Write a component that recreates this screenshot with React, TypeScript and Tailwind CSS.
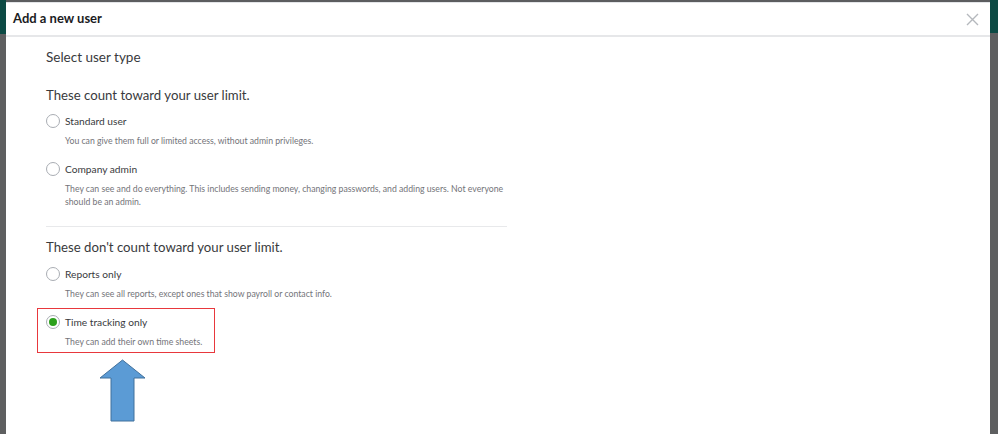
import React from "react";

type Option = { label: string; desc: string[]; checked?: boolean };

function Radio({ checked }: { checked?: boolean }) {
  return (
    <span className="flex h-[14px] w-[14px] shrink-0 items-center justify-center rounded-full border border-[#a9adb3] bg-white">
      {checked && <span className="h-[8px] w-[8px] rounded-full bg-[#2ca01c]" />}
    </span>
  );
}

function Choice({ opt }: { opt: Option }) {
  return (
    <div className="flex flex-col">
      <div className="flex h-[14px] items-center gap-[5px]">
        <Radio checked={opt.checked} />
        <span className="text-[10.2px] leading-[14px] text-[#393a3d]">{opt.label}</span>
      </div>
      <div className="mt-[6px] whitespace-nowrap pl-[19px] text-[8.7px] leading-[13px] text-[#737479]">
        {opt.desc.map((d) => (
          <div key={d}>{d}</div>
        ))}
      </div>
    </div>
  );
}

export default function App() {
  return (
    <div className="flex h-[434px] w-[998px] overflow-hidden bg-[#5c5d5f] font-['Lato',sans-serif]">
      <div className="flex w-[6px] flex-col">
        <div className="h-[34px] bg-[#0c4a44]" />
        <div className="flex-1 bg-[#5e5f60]" />
      </div>
      <div className="flex flex-1 flex-col pt-[2px]">
        <div className="h-[1px] bg-[#e3e5e8]" />
        <div className="flex flex-1 flex-col bg-white">
          <div className="flex h-[34px] items-center justify-between border-b-2 border-[#e6e7e9] pl-[7px] pr-[10px]">
            <span className="text-[13px] font-bold text-[#1b1c1e]">Add a new user</span>
            <svg width="13" height="13" viewBox="0 0 13 13" className="mr-[1px]">
              <path d="M1 1L12 12M12 1L1 12" stroke="#b5b8bd" strokeWidth="1.4" />
            </svg>
          </div>
          <div className="flex flex-col pl-[40px]">
            <div className="mt-[10px] text-[13.5px] leading-[20px] text-[#393a3d]">Select user type</div>
            <div className="mt-[19px] text-[13.2px] leading-[18px] text-[#393a3d]">These count toward your user limit.</div>
            <div className="w-[461px]">
              <div className="mt-[10px] flex flex-col gap-[15px]">
                <Choice opt={{ label: "Standard user", desc: ["You can give them full or limited access, without admin privileges."] }} />
                <Choice
                  opt={{
                    label: "Company admin",
                    desc: [
                      "They can see and do everything. This includes sending money, changing passwords, and adding users. Not everyone",
                      "should be an admin.",
                    ],
                  }}
                />
              </div>
              <div className="mt-[18px] h-[1px] bg-[#e8e9eb]" />
            </div>
            <div className="mt-[11px] text-[13.2px] leading-[18px] text-[#393a3d]">These don't count toward your user limit.</div>
            <div className="mt-[11px]">
              <Choice opt={{ label: "Reports only", desc: ["They can see all reports, except ones that show payroll or contact info."] }} />
            </div>
            <div className="relative mt-[15px]">
              <Choice opt={{ label: "Time tracking only", desc: ["They can add their own time sheets."], checked: true }} />
              <div className="absolute left-[-9px] top-[-7px] h-[45px] w-[178px] border border-[#e8383d]" />
              <svg width="48" height="64" viewBox="0 0 48 64" className="absolute left-[53px] top-[44px]">
                <path d="M23.5 1L46 19H35V62H12V19H1Z" fill="#5b9bd5" stroke="#41719c" strokeWidth="1" />
              </svg>
            </div>
          </div>
        </div>
      </div>
      <div className="flex w-[8px] flex-col">
        <div className="h-[33px] bg-[#0c4a44]" />
        <div className="flex-1 bg-[#5e5f60]" />
      </div>
    </div>
  );
}
